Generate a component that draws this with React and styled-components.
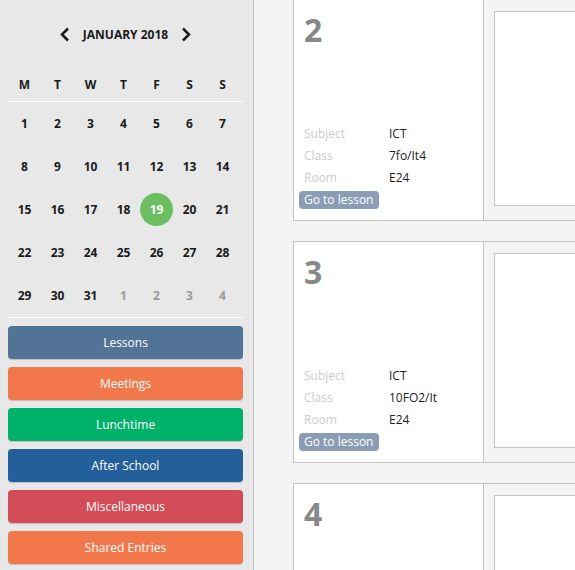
import styled, { createGlobalStyle } from 'styled-components';

const GlobalStyle = createGlobalStyle`
  html, body {
    margin: 0;
    padding: 0;
    height: 100%;
    overflow: hidden;
  }
  body {
    font-family: "Open Sans", "Liberation Sans", sans-serif;
    background: #f4f4f4;
  }
`;

const Layout = styled.div`
  display: flex;
  height: 100vh;
  overflow: hidden;
`;

const Sidebar = styled.aside`
  flex: 0 0 254px;
  box-sizing: border-box;
  padding: 20px 10px 0 8px;
  background: #e8e8e8;
  border-right: 1px solid #c2c2c2;
`;

const MonthHeader = styled.div`
  display: flex;
  align-items: center;
  justify-content: center;
  gap: 13px;
  height: 28px;
  font-size: 12px;
  font-weight: 700;
  color: #1a1a1a;
  text-transform: uppercase;
`;

const NavArrow = styled.svg`
  width: 10px;
  height: 15px;
  display: block;
  stroke: #1a1a1a;
  stroke-width: 2.5;
  fill: none;
`;

const WeekRow = styled.div`
  display: grid;
  grid-template-columns: repeat(7, 33px);
  height: 34px;
  align-items: center;
  margin-top: 19px;
  border-bottom: 1px solid #fff;
  font-size: 12px;
  font-weight: 700;
  color: #1a1a1a;
  text-align: center;
`;

const DayGrid = styled.div`
  display: grid;
  grid-template-columns: repeat(7, 33px);
  grid-auto-rows: 43px;
  align-items: center;
  justify-items: center;
  border-bottom: 1px solid #fff;
`;

const Day = styled.div`
  width: 33px;
  height: 33px;
  border-radius: 50%;
  display: flex;
  align-items: center;
  justify-content: center;
  font-size: 12px;
  font-weight: 700;
  color: ${({ $muted, $today }) => ($today ? '#fff' : $muted ? '#9a9a9a' : '#1a1a1a')};
  background: ${({ $today }) => ($today ? '#6cbf61' : 'transparent')};
`;

const Categories = styled.div`
  display: flex;
  flex-direction: column;
  gap: 8px;
  margin-top: 8px;
`;

const CategoryButton = styled.div`
  height: 33px;
  border-radius: 4px;
  display: flex;
  align-items: center;
  justify-content: center;
  font-size: 12px;
  color: #fff;
  background: ${({ $color }) => $color};
  box-shadow: 0 1px 1px rgba(0, 0, 0, 0.18);
`;

const Main = styled.main`
  flex: 1;
  padding-left: 39px;
  margin-top: -1px;
  overflow: hidden;
`;

const Card = styled.div`
  display: flex;
  box-sizing: border-box;
  width: 620px;
  height: 222px;
  margin-bottom: 20px;
  border: 1px solid #c4c4c4;
  background: #f4f4f4;
`;

const LessonCell = styled.div`
  flex: 0 0 190px;
  box-sizing: border-box;
  display: flex;
  flex-direction: column;
  justify-content: space-between;
  padding: 14px 0 11px 5px;
  background: #fff;
  border-right: 1px solid #c4c4c4;
`;

const PeriodNumber = styled.div`
  padding-left: 5px;
  font-size: 32px;
  line-height: 32px;
  font-weight: 700;
  color: #888;
`;

const Details = styled.div`
  display: flex;
  flex-direction: column;
  align-items: flex-start;
`;

const InfoRow = styled.div`
  display: grid;
  grid-template-columns: 85px auto;
  padding-left: 5px;
  height: 22px;
  line-height: 22px;
  font-size: 12px;
`;

const InfoLabel = styled.span`
  color: #cccccc;
`;

const InfoValue = styled.span`
  color: #222;
`;

const LessonLink = styled.span`
  margin-top: 2px;
  height: 18px;
  line-height: 18px;
  padding: 0 6px 0 5px;
  border-radius: 4px;
  background: #8a9db5;
  color: #fff;
  font-size: 12px;
`;

const NotesCell = styled.div`
  flex: 1;
  display: flex;
  padding: 11px 0 14px 10px;
`;

const NotesBox = styled.div`
  flex: 1;
  background: #fff;
  border: 1px solid #c4c4c4;
`;

const weekdays = ['M', 'T', 'W', 'T', 'F', 'S', 'S'];

const days = [
  ...Array.from({ length: 31 }, (_, i) => ({ n: i + 1 })),
  ...[1, 2, 3, 4].map((n) => ({ n, muted: true })),
];

const categories = [
  { label: 'Lessons', color: '#537396' },
  { label: 'Meetings', color: '#f2784b' },
  { label: 'Lunchtime', color: '#00b16a' },
  { label: 'After School', color: '#225f9b' },
  { label: 'Miscellaneous', color: '#d24d57' },
  { label: 'Shared Entries', color: '#f2784b' },
];

const lessons = [
  { period: 2, subject: 'ICT', group: '7fo/It4', room: 'E24' },
  { period: 3, subject: 'ICT', group: '10FO2/It', room: 'E24' },
  { period: 4 },
];

const Calendar = () => (
  <>
    <MonthHeader>
      <NavArrow viewBox="0 0 10 15"><polyline points="8,1.5 2,7.5 8,13.5" /></NavArrow>
      <span>January 2018</span>
      <NavArrow viewBox="0 0 10 15"><polyline points="2,1.5 8,7.5 2,13.5" /></NavArrow>
    </MonthHeader>
    <WeekRow>
      {weekdays.map((d, i) => <span key={i}>{d}</span>)}
    </WeekRow>
    <DayGrid>
      {days.map((d, i) => (
        <Day key={i} $muted={d.muted} $today={!d.muted && d.n === 19}>{d.n}</Day>
      ))}
    </DayGrid>
  </>
);

const LessonCard = ({ period, subject, group, room }) => (
  <Card>
    <LessonCell>
      <PeriodNumber>{period}</PeriodNumber>
      {subject && (
        <Details>
          <InfoRow><InfoLabel>Subject</InfoLabel><InfoValue>{subject}</InfoValue></InfoRow>
          <InfoRow><InfoLabel>Class</InfoLabel><InfoValue>{group}</InfoValue></InfoRow>
          <InfoRow><InfoLabel>Room</InfoLabel><InfoValue>{room}</InfoValue></InfoRow>
          <LessonLink>Go to lesson</LessonLink>
        </Details>
      )}
    </LessonCell>
    <NotesCell>
      <NotesBox />
    </NotesCell>
  </Card>
);

export default function App() {
  return (
    <>
      <GlobalStyle />
      <Layout>
        <Sidebar>
          <Calendar />
          <Categories>
            {categories.map((c) => (
              <CategoryButton key={c.label} $color={c.color}>{c.label}</CategoryButton>
            ))}
          </Categories>
        </Sidebar>
        <Main>
          {lessons.map((l) => <LessonCard key={l.period} {...l} />)}
        </Main>
      </Layout>
    </>
  );
}
